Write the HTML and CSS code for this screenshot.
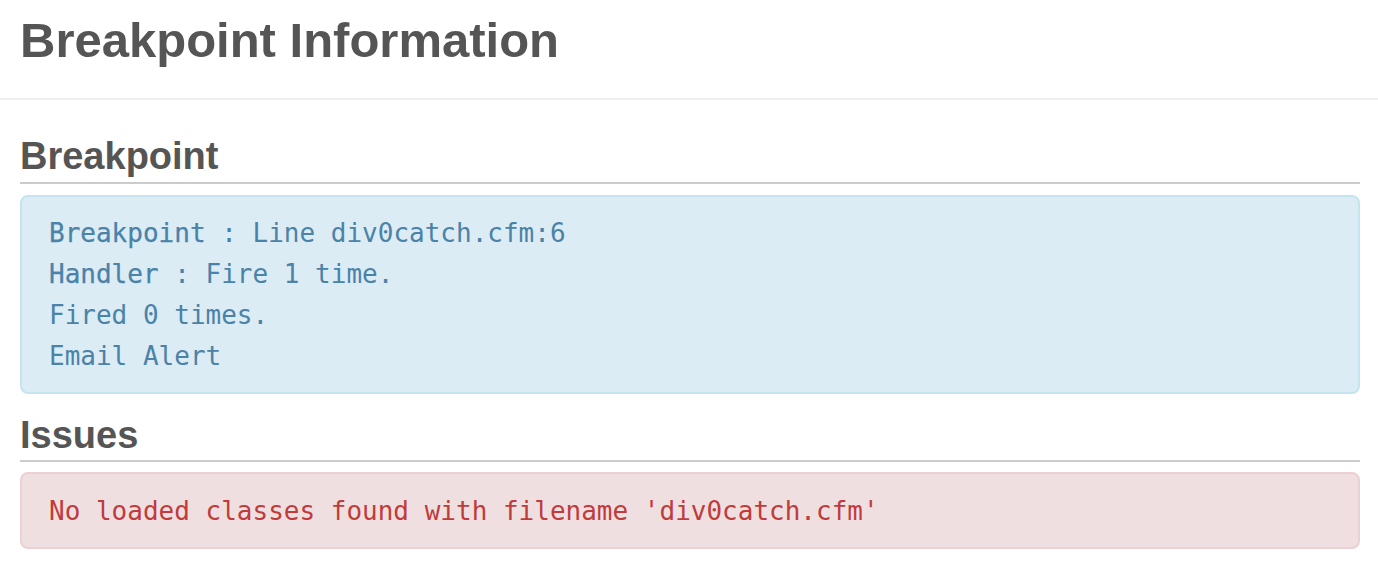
FILE: index.html
```html
<!DOCTYPE html>
<html>
<head>
<meta charset="utf-8">
<title>Breakpoint Information</title>
<link rel="stylesheet" href="styles.css">
</head>
<body>
<header class="page-header">
  <h1 class="title">Breakpoint Information</h1>
</header>
<main class="content">
  <section class="section">
    <h3 class="section-title">Breakpoint</h3>
    <div class="alert alert-info">
      <div class="line"><span class="label">Breakpoint</span> : Line div0catch.cfm:6</div>
      <div class="line"><span class="label">Handler</span> : Fire 1 time.</div>
      <div class="line">Fired 0 times.</div>
      <div class="line">Email Alert</div>
    </div>
  </section>
  <section class="section">
    <h3 class="section-title issues">Issues</h3>
    <div class="alert alert-danger">
      <div class="line">No loaded classes found with filename 'div0catch.cfm'</div>
    </div>
  </section>
</main>
</body>
</html>
```
FILE: styles.css
```css
html, body {
  margin: 0;
  padding: 0;
  background: #ffffff;
}
body {
  font-family: "Liberation Sans", Arial, Helvetica, sans-serif;
  color: #555555;
}
.page-header {
  padding: 14px 20px 30px 20px;
  border-bottom: 2px solid #eeeeee;
}
.title {
  margin: 0;
  font-size: 49px;
  line-height: 1.1;
  font-weight: bold;
  color: #555555;
}
.content {
  padding: 0 18px 0 20px;
}
.section-title {
  margin: 36px 0 0 0;
  padding-bottom: 4px;
  font-size: 38px;
  line-height: 1.1;
  font-weight: bold;
  color: #555555;
  border-bottom: 2px solid #cccccc;
}
.section-title.issues {
  margin-top: 21px;
}
.alert {
  margin-top: 11px;
  padding: 16px 27px 15px 27px;
  border: 2px solid;
  border-radius: 8px;
  font-family: "DejaVu Sans Mono", "Liberation Mono", monospace;
  font-size: 26px;
  line-height: 41px;
}
.alert-info {
  background: #dcecf4;
  border-color: #c4e5ef;
  color: #4a82a8;
}
.alert-danger {
  margin-top: 10px;
  padding-top: 17px;
  background: #f0dfe0;
  border-color: #ebd0d4;
  color: #c03b3b;
}
.label {
  -webkit-text-stroke: 0.25px currentColor;
}
```
